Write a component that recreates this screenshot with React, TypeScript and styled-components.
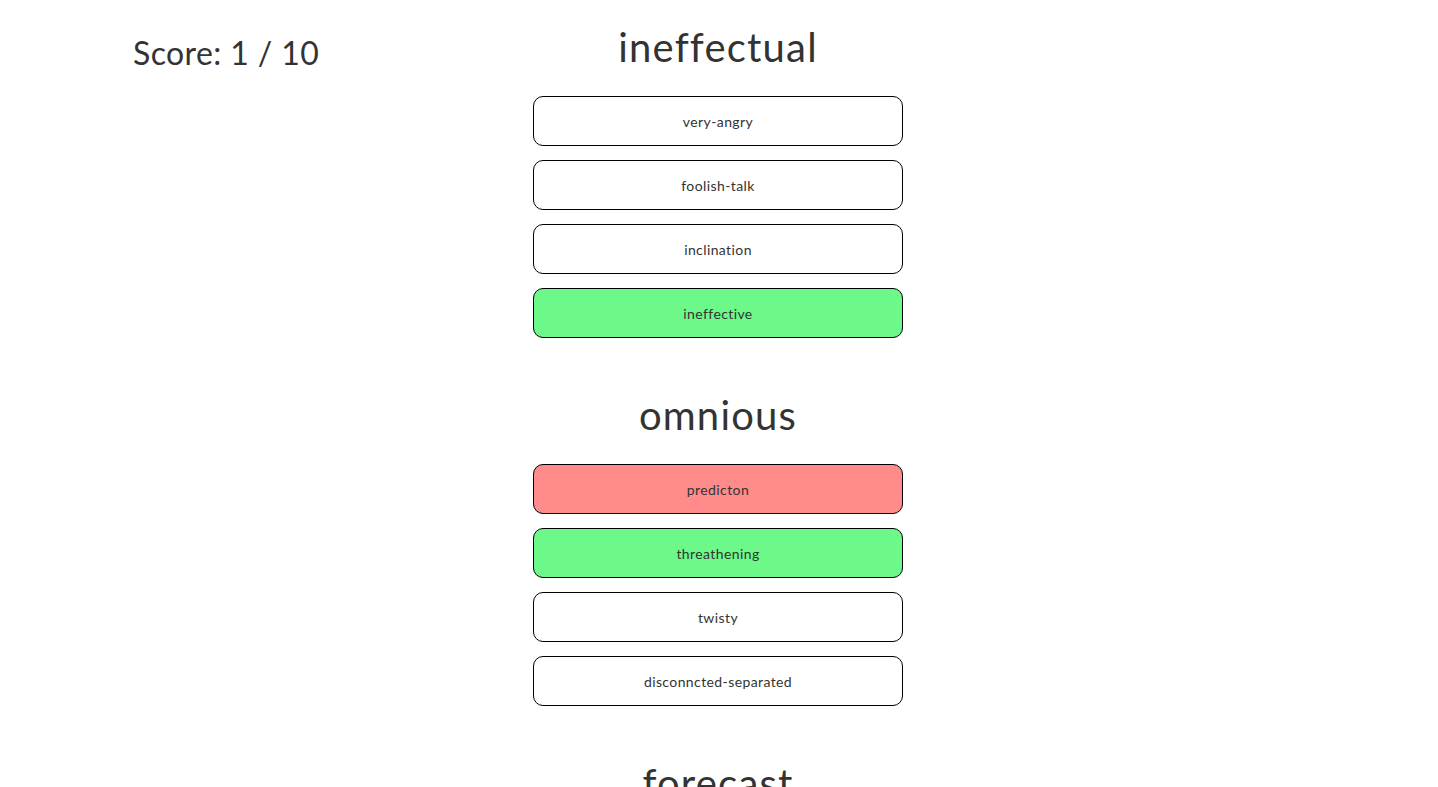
import React from "react";
import styled, { createGlobalStyle } from "styled-components";

const GlobalStyle = createGlobalStyle`
  html, body {
    margin: 0;
    padding: 0;
    overflow: hidden;
    background: #fff;
  }
  body {
    font-family: Lato, "Open Sans", sans-serif;
    color: #333;
  }
`

const Page = styled.div`
  display: grid;
  grid-template-columns: 533px 370px 1fr;
  width: 1438px;
`

const ScoreBox = styled.div`
  padding: 34px 0 0 133px;
  font-size: 32px;
  line-height: 38px;
  letter-spacing: 0.4px;
  color: #333;
`

const Quiz = styled.div`
  display: flex;
  flex-direction: column;
  padding-top: 23px;
`

const Question = styled.section`
  display: flex;
  flex-direction: column;
  margin-bottom: 53px;
`

const Word = styled.h2`
  margin: 0 0 25px;
  font-size: 40px;
  line-height: 48px;
  font-weight: 400;
  letter-spacing: 1.2px;
  text-align: center;
  color: #333;
`

const Options = styled.div`
  display: flex;
  flex-direction: column;
  gap: 14px;
`

const Option = styled.button<{ $state?: "right" | "wrong" }>`
  box-sizing: border-box;
  width: 370px;
  height: 50px;
  border: 1px solid #000;
  border-radius: 10px;
  background: ${(p) =>
    p.$state === "right" ? "#6cf98a" : p.$state === "wrong" ? "#ff8b8b" : "#fff"};
  font-family: Lato, "Open Sans", sans-serif;
  font-size: 14px;
  letter-spacing: 0.4px;
  color: #333;
  text-align: center;
  cursor: pointer;
`

type Q = {
  word: string
  options: { text: string; state?: "right" | "wrong" }[]
}

const questions: Q[] = [
  {
    word: "ineffectual",
    options: [
      { text: "very-angry" },
      { text: "foolish-talk" },
      { text: "inclination" },
      { text: "ineffective", state: "right" },
    ],
  },
  {
    word: "omnious",
    options: [
      { text: "predicton", state: "wrong" },
      { text: "threathening", state: "right" },
      { text: "twisty" },
      { text: "disconncted-separated" },
    ],
  },
  {
    word: "forecast",
    options: [
      { text: "predicton" },
      { text: "weary" },
      { text: "bitter" },
      { text: "enthusiasm" },
    ],
  },
]

export default function App() {
  return (
    <>
      <GlobalStyle />
      <Page>
        <ScoreBox>Score: 1 / 10</ScoreBox>
        <Quiz>
          {questions.map((q) => (
            <Question key={q.word}>
              <Word>{q.word}</Word>
              <Options>
                {q.options.map((o) => (
                  <Option key={o.text} $state={o.state}>
                    {o.text}
                  </Option>
                ))}
              </Options>
            </Question>
          ))}
        </Quiz>
        <div />
      </Page>
    </>
  )
}
